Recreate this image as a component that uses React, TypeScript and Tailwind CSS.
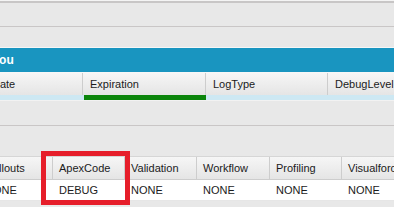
import React from 'react';

const topCols = [
  { label: 'Date', w: 'w-[98px]', ml: '-ml-[15px]' },
  { label: 'Expiration', w: 'w-[123px]' },
  { label: 'LogType', w: 'w-[122px]' },
  { label: 'DebugLevel', w: 'w-[123px]' },
];

const levelCols = [
  { label: 'Callouts', value: 'NONE', w: 'w-[74px]', ml: '-ml-[21px]' },
  { label: 'ApexCode', value: 'DEBUG', w: 'w-[72px]' },
  { label: 'Validation', value: 'NONE', w: 'w-[72px]' },
  { label: 'Workflow', value: 'NONE', w: 'w-[73px]' },
  { label: 'Profiling', value: 'NONE', w: 'w-[72px]' },
  { label: 'Visualforce', value: 'NONE', w: 'w-[72px]' },
];

export default function App() {
  return (
    <div className="relative w-[394px] h-[207px] overflow-hidden bg-[#e8e8e8] font-['Liberation_Sans',Arial,sans-serif] text-[11px] text-[#1b1b1b]">
      {/* toolbar strips */}
      <div className="h-[1px] bg-[#f4f4f4]" />
      <div className="h-[2px] bg-[#c8c6c6]" />
      <div className="h-[24px] border-b border-[#c9c6c6]" />
      <div className="h-[21px] border-b border-[#f6f6f6]" />

      {/* logs panel title */}
      <div className="h-[24px] bg-[#1995c0] flex items-center">
        <span className="-ml-[8px] font-bold text-white text-[12px]">You</span>
      </div>

      {/* logs grid header */}
      <div className="flex h-[23px] border-t border-[#f7f7f7] bg-gradient-to-b from-[#f6f6f6] to-[#e5e5e5]">
        {topCols.map((c) => (
          <div
            key={c.label}
            className={`${c.w} ${c.ml ?? ''} shrink-0 flex items-center pl-[7px] border-r border-[#cdcdcd]`}
          >
            {c.label}
          </div>
        ))}
      </div>
      <div className="flex h-[5px] bg-[#cde8f3]">
        <div className="w-[84px] shrink-0" />
        <div className="w-[122px] shrink-0 bg-[#0b850b]" />
      </div>
      <div className="h-[1px] bg-[#f2f2f2]" />

      {/* debug level toolbar */}
      <div className="h-[25px] border-b border-[#c9c6c6]" />
      <div className="h-[30px]" />

      {/* debug level grid */}
      <div className="flex h-[24px] border-t border-[#d6d6d6] bg-gradient-to-b from-[#f6f6f6] to-[#e5e5e5] border-b border-b-[#cdcdcd]">
        {levelCols.map((c) => (
          <div
            key={c.label}
            className={`${c.w} ${c.ml ?? ''} shrink-0 flex items-center pl-[6px] border-r border-[#cdcdcd]`}
          >
            {c.label}
          </div>
        ))}
      </div>
      <div className="flex h-[21px] bg-white border-b border-[#e6e6e6]">
        {levelCols.map((c) => (
          <div
            key={c.label}
            className={`${c.w} ${c.ml ?? ''} shrink-0 flex items-center pl-[6px]`}
          >
            {c.value}
          </div>
        ))}
      </div>

      {/* highlight annotation */}
      <div className="absolute left-[41px] top-[151px] w-[89px] h-[54px] border-[5px] border-[#e61e2a]" />
    </div>
  );
}
